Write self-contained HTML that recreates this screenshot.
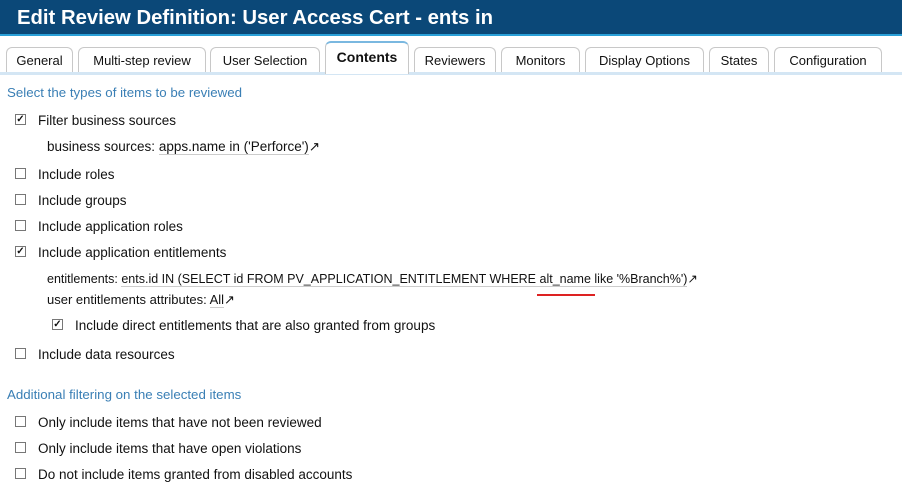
<!DOCTYPE html>
<html><head><style>
body{margin:0;width:902px;height:499px;background:#fff;position:relative;overflow:hidden;font-family:"Liberation Sans",sans-serif;font-size:13.5px;color:#111}
.hdr{position:absolute;left:0;top:0;width:902px;height:34px;background:#0b4878;border-bottom:2px solid #2aa0d8}
.hdr span{position:absolute;left:17px;top:7px;color:#fff;font-weight:bold;font-size:20.3px}
.tab{position:absolute;top:47px;height:25px;border:1px solid #c8c8c8;border-bottom:none;border-radius:6px 6px 0 0;background:#fff;text-align:center;line-height:26px;font-size:13px;box-sizing:border-box}
.tab.a{top:41px;height:33px;border-top:2px solid #7ab8e0;font-weight:bold;line-height:29px;font-size:14px}
.line{position:absolute;left:0;top:72px;width:902px;height:3px;background:#d4e6f4}
.t{position:absolute;white-space:nowrap;margin-top:1px}
.h{color:#3a7fb5}
.cb{position:absolute;width:9px;height:9px;border:1px solid #777;background:#fff;font-size:10px;line-height:9px;text-align:center;font-weight:bold}
.u{border-bottom:1px solid #ccc}
</style></head><body>
<div class="hdr"><span>Edit Review Definition: User Access Cert - ents in</span></div>
<div class="tab" style="left:6px;width:67px">General</div>
<div class="tab" style="left:78px;width:128px">Multi-step review</div>
<div class="tab" style="left:210px;width:110px">User Selection</div>
<div class="tab" style="left:414px;width:82px">Reviewers</div>
<div class="tab" style="left:501px;width:79px">Monitors</div>
<div class="tab" style="left:585px;width:119px">Display Options</div>
<div class="tab" style="left:709px;width:60px">States</div>
<div class="tab" style="left:774px;width:108px">Configuration</div>
<div class="line"></div>
<div class="tab a" style="left:325px;width:84px">Contents</div>

<div class="t h" style="left:7px;top:84px;font-size:13.3px">Select the types of items to be reviewed</div>
<div class="cb" style="left:15px;top:114px">✓</div><div class="t" style="left:38px;top:112px">Filter business sources</div>
<div class="t" style="left:47px;top:138px">business sources: <span class="u">apps.name in ('Perforce')</span>↗</div>
<div class="cb" style="left:15px;top:168px"></div><div class="t" style="left:38px;top:166px">Include roles</div>
<div class="cb" style="left:15px;top:194px"></div><div class="t" style="left:38px;top:192px">Include groups</div>
<div class="cb" style="left:15px;top:220px"></div><div class="t" style="left:38px;top:218px">Include application roles</div>
<div class="cb" style="left:15px;top:246px">✓</div><div class="t" style="left:38px;top:244px">Include application entitlements</div>
<div class="t" style="left:47px;top:270px;font-size:12.5px">entitlements: <span class="u">ents.id IN (SELECT id FROM PV_APPLICATION_ENTITLEMENT WHERE alt_name like '%Branch%')</span>↗</div>
<div style="position:absolute;left:537px;top:294px;width:58px;height:2px;background:#d22"></div>
<div class="t" style="left:47px;top:291px;font-size:13px">user entitlements attributes: <span class="u">All</span>↗</div>
<div class="cb" style="left:52px;top:319px">✓</div><div class="t" style="left:75px;top:317px">Include direct entitlements that are also granted from groups</div>
<div class="cb" style="left:15px;top:348px"></div><div class="t" style="left:38px;top:346px">Include data resources</div>
<div class="t h" style="left:7px;top:386px;font-size:13.3px">Additional filtering on the selected items</div>
<div class="cb" style="left:15px;top:416px"></div><div class="t" style="left:38px;top:414px">Only include items that have not been reviewed</div>
<div class="cb" style="left:15px;top:442px"></div><div class="t" style="left:38px;top:440px">Only include items that have open violations</div>
<div class="cb" style="left:15px;top:468px"></div><div class="t" style="left:38px;top:466px">Do not include items granted from disabled accounts</div>
</body></html>
